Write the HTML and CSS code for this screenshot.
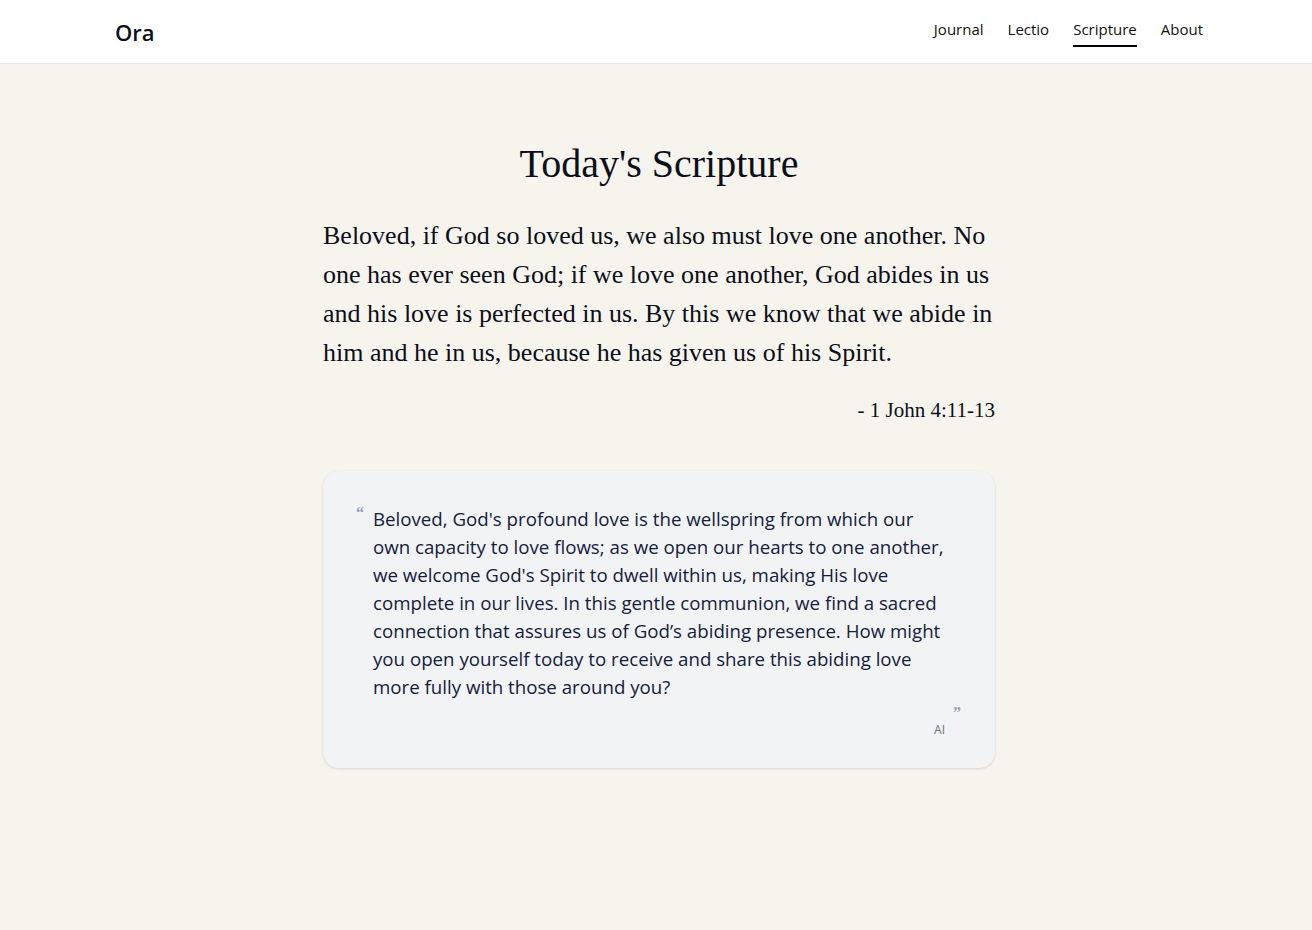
FILE: index.html
```html
<!DOCTYPE html>
<html lang="en">
<head>
<meta charset="utf-8">
<title>Ora - Scripture</title>
<link rel="stylesheet" href="styles.css">
</head>
<body>
<header class="site-header">
  <div class="header-inner">
    <a class="logo" href="#">Ora</a>
    <nav class="nav">
      <a href="#" class="nav-link">Journal</a>
      <a href="#" class="nav-link">Lectio</a>
      <a href="#" class="nav-link active">Scripture</a>
      <a href="#" class="nav-link">About</a>
    </nav>
  </div>
</header>
<main class="main">
  <h1 class="title">Today's Scripture</h1>
  <p class="verse">Beloved, if God so loved us, we also must love one another. No one has ever seen God; if we love one another, God abides in us and his love is perfected in us. By this we know that we abide in him and he in us, because he has given us of his Spirit.</p>
  <p class="ref">- 1 John 4:11-13</p>
  <div class="card">
    <span class="q-open">&ldquo;</span>
    <p class="reflection">Beloved, God's profound love is the wellspring from which our own capacity to love flows; as we open our hearts to one another, we welcome God's Spirit to dwell within us, making His love complete in our lives. In this gentle communion, we find a sacred connection that assures us of God’s abiding presence. How might you open yourself today to receive and share this abiding love more fully with those around you?</p>
    <div class="card-foot">
      <span class="ai">AI</span>
      <span class="q-close">&rdquo;</span>
    </div>
  </div>
</main>
</body>
</html>
```
FILE: styles.css
```css
* { box-sizing: border-box; }
html, body { margin: 0; padding: 0; }
body {
  background: #f7f4ee;
  font-family: "Open Sans", "Noto Sans", sans-serif;
  color: #0b0f19;
  min-height: 930px;
  padding-left: 6px;
}
.site-header {
  background: #fff;
  border-bottom: 1px solid #e5e5e5;
  height: 64px;
  margin-left: -6px;
  padding-left: 6px;
}
.header-inner {
  max-width: 1088px;
  margin: 0 auto;
  height: 63px;
  display: flex;
  align-items: center;
  justify-content: space-between;
}
.logo {
  font-size: 22px;
  font-weight: 600;
  color: #0b0f19;
  text-decoration: none;
  padding-top: 1px;
}
.nav {
  display: flex;
  gap: 24px;
  align-items: center;
  height: 100%;
}
.nav-link {
  font-size: 15px;
  color: #111;
  text-decoration: none;
  margin-top: -5px;
  position: relative;
}
.nav-link.active::after {
  content: "";
  position: absolute;
  left: 0;
  right: 0;
  bottom: -8px;
  height: 2px;
  background: #000;
}
.main {
  max-width: 672px;
  margin: 0 auto;
  padding-top: 76px;
}
.title {
  font-family: "Liberation Serif", "Times New Roman", serif;
  font-weight: 400;
  font-size: 40px;
  text-align: center;
  margin: 0 0 28px;
  line-height: 1.2;
  color: #0b0f19;
}
.verse {
  font-family: "Liberation Serif", "Times New Roman", serif;
  font-size: 26px;
  line-height: 39px;
  margin: 0;
  color: #0b0f19;
}
.ref {
  font-family: "Liberation Serif", "Times New Roman", serif;
  font-size: 21px;
  text-align: right;
  margin: 26px 0 0;
  color: #0b0f19;
}
.card {
  margin-top: 48px;
  background: #f2f3f5;
  border-radius: 16px;
  box-shadow: 0 1px 3px rgba(0,0,0,0.12);
  padding: 34px 42px 30px 50px;
  position: relative;
}
.q-open {
  position: absolute;
  left: 33px;
  top: 33px;
  font-family: "Liberation Serif", serif;
  font-size: 16px;
  font-weight: 700;
  color: #93a0b8;
}
.reflection {
  margin: 0;
  font-size: 18.7px;
  line-height: 28px;
  color: #14203f;
}
.card-foot {
  display: flex;
  justify-content: flex-end;
  align-items: flex-start;
  gap: 8px;
  margin-top: 4px;
  margin-right: -8px;
}
.ai {
  font-size: 12px;
  color: #6b7280;
  margin-top: 16px;
}
.q-close {
  font-family: "Liberation Serif", serif;
  font-size: 16px;
  font-weight: 700;
  color: #93a0b8;
  line-height: 1;
}
```
